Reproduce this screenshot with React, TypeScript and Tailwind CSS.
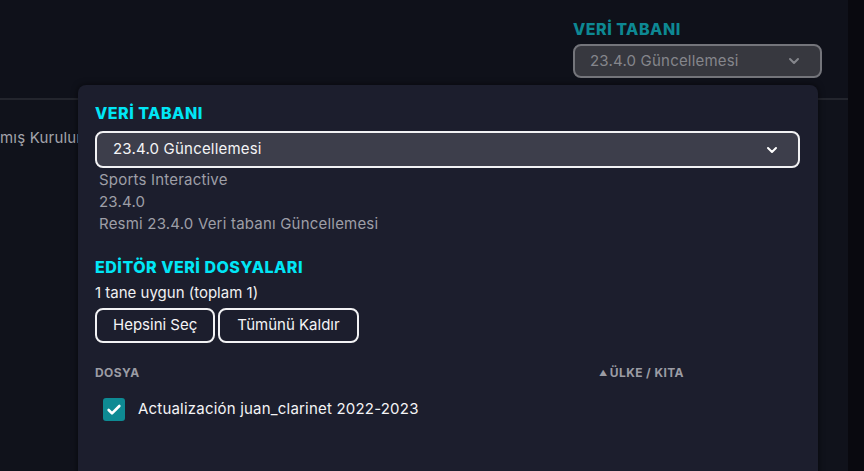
import { ChevronDown, Check } from 'lucide-react';

const font = { fontFamily: 'Inter, "Noto Sans", sans-serif' };

export default function App() {
  return (
    <div className="relative w-[864px] h-[471px] overflow-hidden bg-[#0f111a] flex" style={font}>
      {/* Background screen (dimmed behind the popover) */}
      <div className="flex-1 flex flex-col">
        <div className="h-[100px] flex justify-end pr-[26px] pt-[19px] border-b-2 border-[#23252d]">
          <div className="w-[249px]">
            <div className="text-[16px] font-extrabold tracking-[0.5px] text-[#0d8893] leading-5">VERİ TABANI</div>
            <div className="mt-[5px] h-[34px] rounded-lg border-2 border-[#74757b] bg-[#37383f] flex items-center justify-between pl-[15px] pr-[18px]">
              <span className="text-[15px] tracking-[0.2px] text-[#85868c]">23.4.0 Güncellemesi</span>
              <ChevronDown className="w-4 h-4 text-[#85868c]" strokeWidth={3} />
            </div>
          </div>
        </div>
        <div className="flex-1 bg-[#10121b] pt-[25px]">
          <span className="text-[15px] tracking-[0.2px] text-[#a3a4ab] whitespace-nowrap">mış Kurulum</span>
        </div>
      </div>
      <div className="w-[16px] bg-[#09090f]" />

      {/* Popover */}
      <div className="absolute left-[78px] top-[85px] w-[740px] h-[400px] rounded-lg bg-[#1c1e2d] shadow-[0_0_6px_rgba(0,0,0,0.6)] pl-[17px] pr-[18px] pt-[18px]">
        <div className="text-[16px] font-extrabold tracking-[0.5px] text-[#00e6f6] leading-5">VERİ TABANI</div>
        <div className="mt-[8px] h-[37px] rounded-lg border-2 border-[#f2f2f4] bg-[#3d3e4b] flex items-center justify-between pl-[16px] pr-[18px]">
          <span className="text-[15px] tracking-[0.2px] text-[#f4f4f6]">23.4.0 Güncellemesi</span>
          <ChevronDown className="w-4 h-4 text-white" strokeWidth={3} />
        </div>
        <div className="mt-[1px] pl-[4px] text-[15px] tracking-[0.2px] leading-[22px] text-[#9e9fa7]">
          <div>Sports Interactive</div>
          <div>23.4.0</div>
          <div>Resmi 23.4.0 Veri tabanı Güncellemesi</div>
        </div>

        <div className="mt-[22px] text-[16px] font-extrabold tracking-[0.5px] text-[#00e6f6] leading-5">EDİTÖR VERİ DOSYALARI</div>
        <div className="mt-[6px] text-[15px] text-[#f0f0f2] leading-5">1 tane uygun (toplam 1)</div>
        <div className="mt-[5px] flex gap-[3px]">
          <button className="h-[35px] px-[16px] rounded-lg border-2 border-[#f2f2f4] text-[15px] text-[#f4f4f6]">Hepsini Seç</button>
          <button className="h-[35px] px-[17px] rounded-lg border-2 border-[#f2f2f4] text-[15px] text-[#f4f4f6]">Tümünü Kaldır</button>
        </div>

        <div className="mt-[22px] flex text-[12px] font-bold tracking-[0.4px] text-[#9b9ca4] leading-4">
          <div className="w-[504px]">DOSYA</div>
          <div className="flex items-center gap-[2px]">
            <span className="text-[8px]">▲</span>
            <span>ÜLKE / KITA</span>
          </div>
        </div>

        <div className="mt-[17px] pl-[8px] flex items-center gap-[13px]">
          <div className="w-[22px] h-[23px] rounded-[3px] bg-[#0e8a93] flex items-center justify-center">
            <Check className="w-4 h-4 text-white" strokeWidth={4} />
          </div>
          <span className="text-[15px] tracking-[0.2px] text-[#f4f4f6]">Actualización juan_clarinet 2022-2023</span>
        </div>
      </div>
    </div>
  );
}
